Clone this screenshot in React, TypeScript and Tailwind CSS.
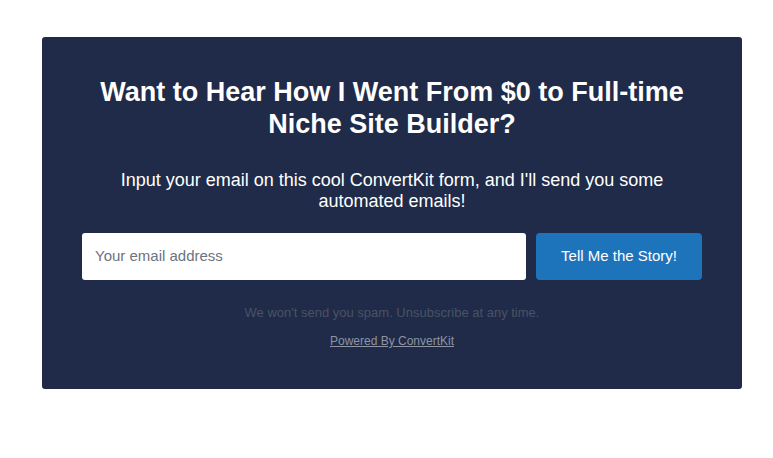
import React from "react";

export default function App() {
  return (
    <div className="w-[773px] h-[458px] bg-white pt-[37px]" style={{ fontFamily: '"Liberation Sans", Arial, sans-serif' }}>
      <div className="ml-[42px] w-[700px] h-[352px] bg-[#1f2b49] rounded-[3px] px-[40px] pt-[39px] flex flex-col items-center">
        <h1 className="text-white font-bold text-[27px] leading-[32px] text-center w-[620px]">
          Want to Hear How I Went From $0 to Full-time Niche Site Builder?
        </h1>
        <p className="mt-[30px] text-white text-[18px] leading-[21px] text-center w-[560px]">
          Input your email on this cool ConvertKit form, and I'll send you some automated emails!
        </p>
        <div className="mt-[21px] flex gap-[10px] w-full">
          <div className="flex-1 h-[47px] bg-white rounded-[3px] flex items-center px-[13px] text-[15px] text-[#6b7380]">
            Your email address
          </div>
          <div className="w-[166px] h-[47px] bg-[#1e74bb] rounded-[4px] flex items-center justify-center text-white text-[15px]">
            Tell Me the Story!
          </div>
        </div>
        <p className="mt-[25px] text-[13px] leading-[16px] text-[#4b5265]">
          We won't send you spam. Unsubscribe at any time.
        </p>
        <p className="mt-[13px] text-[12px] leading-[14px] text-[#8e94a2] underline">Powered By ConvertKit</p>
      </div>
    </div>
  );
}
